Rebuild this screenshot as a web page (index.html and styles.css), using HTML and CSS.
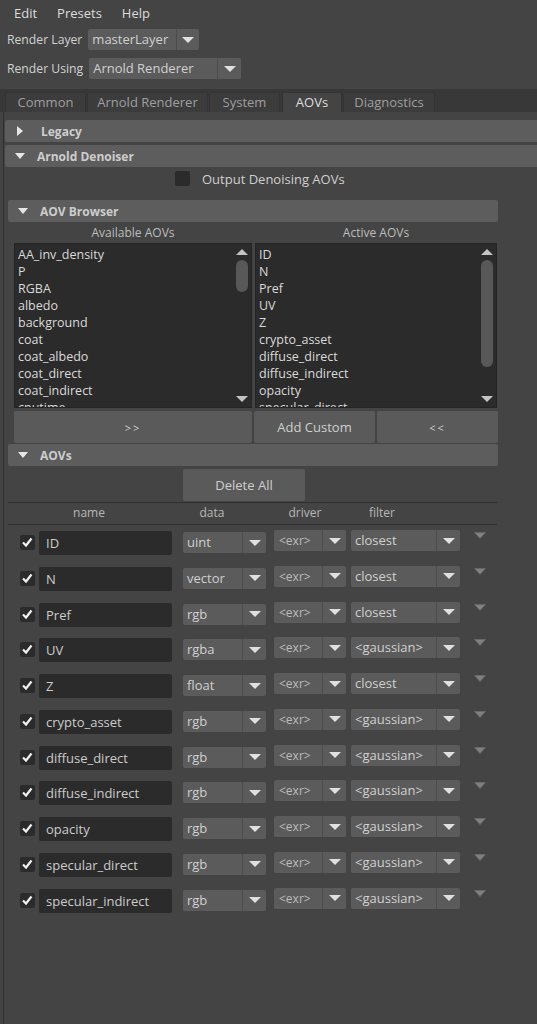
FILE: index.html
```html
<!DOCTYPE html>
<html lang="en">
<head>
  <meta charset="UTF-8" />
  <title>Render Settings</title>
  <link rel="stylesheet" href="styles.css">
</head>
<body>
  <div class="menubar">
    <span>Edit</span>
    <span>Presets</span>
    <span>Help</span>
  </div>

  <div class="field-row">
    <label>Render Layer</label>
    <div class="combo combo-layer"><span class="value">masterLayer</span><span class="drop"></span></div>
  </div>
  <div class="field-row">
    <label>Render Using</label>
    <div class="combo combo-renderer"><span class="value">Arnold Renderer</span><span class="drop"></span></div>
  </div>

  <div class="tabbar">
    <div class="tab tab-common">Common</div>
    <div class="tab tab-arnold">Arnold Renderer</div>
    <div class="tab tab-system">System</div>
    <div class="tab tab-aovs active">AOVs</div>
    <div class="tab tab-diag">Diagnostics</div>
  </div>

  <div class="panel">
    <div class="frame-head wide collapsed"><span class="twist"></span>Legacy</div>
    <div class="frame-head wide"><span class="twist"></span>Arnold Denoiser</div>

    <div class="denoise-row">
      <span class="check"></span>
      <span>Output Denoising AOVs</span>
    </div>

    <div class="section">
      <div class="frame-head"><span class="twist"></span>AOV Browser</div>

      <div class="browser">
        <div class="browser-col col-available">
          <div class="list-title">Available AOVs</div>
          <div class="list">
            <div class="items">
              <div>AA_inv_density</div>
              <div>P</div>
              <div>RGBA</div>
              <div>albedo</div>
              <div>background</div>
              <div>coat</div>
              <div>coat_albedo</div>
              <div>coat_direct</div>
              <div>coat_indirect</div>
              <div>cputime</div>
              <div>diffuse</div>
            </div>
            <div class="scrollbar">
              <span class="sb-up"></span>
              <span class="thumb thumb-short"></span>
              <span class="sb-fill"></span>
              <span class="sb-down"></span>
            </div>
          </div>
        </div>
        <div class="browser-col col-active">
          <div class="list-title">Active AOVs</div>
          <div class="list">
            <div class="items">
              <div>ID</div>
              <div>N</div>
              <div>Pref</div>
              <div>UV</div>
              <div>Z</div>
              <div>crypto_asset</div>
              <div>diffuse_direct</div>
              <div>diffuse_indirect</div>
              <div>opacity</div>
              <div>specular_direct</div>
              <div>specular_indirect</div>
            </div>
            <div class="scrollbar">
              <span class="sb-up"></span>
              <span class="thumb thumb-long"></span>
              <span class="sb-fill"></span>
              <span class="sb-down"></span>
            </div>
          </div>
        </div>
      </div>

      <div class="browser-buttons">
        <button class="btn btn-add">&gt;&gt;</button>
        <button class="btn btn-custom">Add Custom</button>
        <button class="btn btn-remove">&lt;&lt;</button>
      </div>

      <div class="frame-head aovs-head"><span class="twist"></span>AOVs</div>

      <div class="delete-row">
        <button class="btn btn-delete">Delete All</button>
      </div>

      <div class="col-heads">
        <span>name</span>
        <span>data</span>
        <span>driver</span>
        <span>filter</span>
      </div>

      <div class="aov-rows">
        <div class="aov-row">
          <span class="check"></span>
          <div class="name-field">ID</div>
          <div class="combo combo-data"><span class="value">uint</span><span class="drop"></span></div>
          <div class="combo combo-driver"><span class="value">&lt;exr&gt;</span><span class="drop"></span></div>
          <div class="combo combo-filter"><span class="value">closest</span><span class="drop"></span></div>
          <span class="row-menu"></span>
        </div>
        <div class="aov-row">
          <span class="check"></span>
          <div class="name-field">N</div>
          <div class="combo combo-data"><span class="value">vector</span><span class="drop"></span></div>
          <div class="combo combo-driver"><span class="value">&lt;exr&gt;</span><span class="drop"></span></div>
          <div class="combo combo-filter"><span class="value">closest</span><span class="drop"></span></div>
          <span class="row-menu"></span>
        </div>
        <div class="aov-row">
          <span class="check"></span>
          <div class="name-field">Pref</div>
          <div class="combo combo-data"><span class="value">rgb</span><span class="drop"></span></div>
          <div class="combo combo-driver"><span class="value">&lt;exr&gt;</span><span class="drop"></span></div>
          <div class="combo combo-filter"><span class="value">closest</span><span class="drop"></span></div>
          <span class="row-menu"></span>
        </div>
        <div class="aov-row">
          <span class="check"></span>
          <div class="name-field">UV</div>
          <div class="combo combo-data"><span class="value">rgba</span><span class="drop"></span></div>
          <div class="combo combo-driver"><span class="value">&lt;exr&gt;</span><span class="drop"></span></div>
          <div class="combo combo-filter"><span class="value">&lt;gaussian&gt;</span><span class="drop"></span></div>
          <span class="row-menu"></span>
        </div>
        <div class="aov-row">
          <span class="check"></span>
          <div class="name-field">Z</div>
          <div class="combo combo-data"><span class="value">float</span><span class="drop"></span></div>
          <div class="combo combo-driver"><span class="value">&lt;exr&gt;</span><span class="drop"></span></div>
          <div class="combo combo-filter"><span class="value">closest</span><span class="drop"></span></div>
          <span class="row-menu"></span>
        </div>
        <div class="aov-row">
          <span class="check"></span>
          <div class="name-field">crypto_asset</div>
          <div class="combo combo-data"><span class="value">rgb</span><span class="drop"></span></div>
          <div class="combo combo-driver"><span class="value">&lt;exr&gt;</span><span class="drop"></span></div>
          <div class="combo combo-filter"><span class="value">&lt;gaussian&gt;</span><span class="drop"></span></div>
          <span class="row-menu"></span>
        </div>
        <div class="aov-row">
          <span class="check"></span>
          <div class="name-field">diffuse_direct</div>
          <div class="combo combo-data"><span class="value">rgb</span><span class="drop"></span></div>
          <div class="combo combo-driver"><span class="value">&lt;exr&gt;</span><span class="drop"></span></div>
          <div class="combo combo-filter"><span class="value">&lt;gaussian&gt;</span><span class="drop"></span></div>
          <span class="row-menu"></span>
        </div>
        <div class="aov-row">
          <span class="check"></span>
          <div class="name-field">diffuse_indirect</div>
          <div class="combo combo-data"><span class="value">rgb</span><span class="drop"></span></div>
          <div class="combo combo-driver"><span class="value">&lt;exr&gt;</span><span class="drop"></span></div>
          <div class="combo combo-filter"><span class="value">&lt;gaussian&gt;</span><span class="drop"></span></div>
          <span class="row-menu"></span>
        </div>
        <div class="aov-row">
          <span class="check"></span>
          <div class="name-field">opacity</div>
          <div class="combo combo-data"><span class="value">rgb</span><span class="drop"></span></div>
          <div class="combo combo-driver"><span class="value">&lt;exr&gt;</span><span class="drop"></span></div>
          <div class="combo combo-filter"><span class="value">&lt;gaussian&gt;</span><span class="drop"></span></div>
          <span class="row-menu"></span>
        </div>
        <div class="aov-row">
          <span class="check"></span>
          <div class="name-field">specular_direct</div>
          <div class="combo combo-data"><span class="value">rgb</span><span class="drop"></span></div>
          <div class="combo combo-driver"><span class="value">&lt;exr&gt;</span><span class="drop"></span></div>
          <div class="combo combo-filter"><span class="value">&lt;gaussian&gt;</span><span class="drop"></span></div>
          <span class="row-menu"></span>
        </div>
        <div class="aov-row">
          <span class="check"></span>
          <div class="name-field">specular_indirect</div>
          <div class="combo combo-data"><span class="value">rgb</span><span class="drop"></span></div>
          <div class="combo combo-driver"><span class="value">&lt;exr&gt;</span><span class="drop"></span></div>
          <div class="combo combo-filter"><span class="value">&lt;gaussian&gt;</span><span class="drop"></span></div>
          <span class="row-menu"></span>
        </div>
      </div>
    </div>
  </div>
</body>
</html>
```

FILE: styles.css
```css
* {
  box-sizing: border-box;
}

html, body {
  margin: 0;
  height: 100%;
}

body {
  background: #444;
  color: #cfcfcf;
  font-family: "Open Sans", "Noto Sans", sans-serif;
  font-size: 12px;
  overflow: hidden;
}

/* top menu + render fields */

.menubar {
  display: flex;
  gap: 20px;
  height: 26px;
  align-items: center;
  padding-left: 14px;
  color: #dcdcdc;
  font-size: 13px;
}

.field-row {
  display: flex;
  align-items: center;
  gap: 6px;
  height: 21px;
  margin-top: 3px;
  padding-left: 7px;
  font-size: 12.2px;
  color: #d2d2d2;
}

.field-row + .field-row {
  margin-top: 8px;
}

.combo {
  display: flex;
  height: 21px;
  background: #5b5b5b;
  border-radius: 2px;
  color: #d0d0d0;
}

.combo .value {
  flex: 1;
  padding-left: 4px;
  line-height: 21px;
  white-space: nowrap;
  overflow: hidden;
}

.combo .drop {
  width: 24px;
  border-left: 1px solid #4c4c4c;
  display: flex;
  align-items: center;
  justify-content: center;
}

.combo .drop::after {
  content: "";
  border-left: 6px solid transparent;
  border-right: 6px solid transparent;
  border-top: 6px solid #e0e0e0;
}

.combo-layer {
  width: 111px;
  font-size: 13px;
}

.combo-layer .drop {
  width: 23px;
}

.combo-renderer {
  width: 152px;
  font-size: 13px;
}

/* tabs */

.tabbar {
  display: flex;
  align-items: flex-end;
  gap: 1px;
  height: 23px;
  margin-top: 10px;
  padding-left: 5px;
  background: #383838;
}

.tab {
  height: 20px;
  line-height: 19px;
  text-align: center;
  background: #3c3c3c;
  color: #9f9f9f;
  font-size: 13px;
  border: 1px solid #333;
  border-bottom: none;
  border-radius: 2px 2px 0 0;
}

.tab.active {
  background: #444;
  color: #dedede;
}

.tab-common { width: 81px; }
.tab-arnold { width: 121px; }
.tab-system { width: 71px; }
.tab-aovs { width: 60px; margin-left: 1px; }
.tab-diag { width: 92px; }

/* main panel */

.panel {
  margin-left: 3px;
  border-left: 1px solid #2f2f2f;
  padding: 8px 0 0 1px;
  min-height: calc(100vh - 112px);
}

.frame-head {
  display: flex;
  align-items: center;
  height: 22px;
  background: #5d5d5d;
  border-radius: 2px;
  font-weight: bold;
  color: #cdcdcd;
  white-space: nowrap;
}

.frame-head.wide {
  width: 560px;
}

.frame-head + .frame-head {
  margin-top: 3px;
}

.twist {
  width: 32px;
  height: 22px;
  display: flex;
  align-items: center;
  padding-left: 10px;
}

.twist::after {
  content: "";
  border-left: 5px solid transparent;
  border-right: 5px solid transparent;
  border-top: 6px solid #e6e6e6;
}

.collapsed .twist {
  width: 36px;
  padding-left: 12px;
}

.collapsed .twist::after {
  border-top: 5px solid transparent;
  border-bottom: 5px solid transparent;
  border-left: 6px solid #e6e6e6;
  border-right: none;
}

.check {
  display: inline-block;
  width: 15px;
  height: 15px;
  background: #2b2b2b;
  border-radius: 2px;
  flex-shrink: 0;
}

.denoise-row {
  display: flex;
  align-items: center;
  gap: 12px;
  height: 15px;
  margin-top: 4px;
  padding-left: 170px;
  font-size: 13px;
  color: #cfcfcf;
}

.section {
  width: 490px;
  margin: 14px 0 0 3px;
}

/* aov browser */

.browser {
  display: flex;
  gap: 3px;
  padding-left: 6px;
}

.col-available { width: 238px; }
.col-active { width: 242px; }

.list-title {
  height: 21px;
  line-height: 22px;
  text-align: center;
  color: #bdbdbd;
}

.list {
  display: flex;
  height: 165px;
  background: #2b2b2b;
  border: 1px solid #242424;
  overflow: hidden;
}

.items {
  flex: 1;
  padding: 2px 0 0 3px;
  line-height: 17px;
  font-size: 12.5px;
  color: #dadada;
  overflow: hidden;
}

.scrollbar {
  display: flex;
  flex-direction: column;
  align-items: center;
  width: 14px;
  margin-right: 2px;
}

.sb-up, .sb-down {
  height: 16px;
  display: flex;
  align-items: center;
  justify-content: center;
}

.sb-up::after {
  content: "";
  border-left: 6px solid transparent;
  border-right: 6px solid transparent;
  border-bottom: 6px solid #c4c4c4;
}

.sb-down::after {
  content: "";
  border-left: 6px solid transparent;
  border-right: 6px solid transparent;
  border-top: 6px solid #c4c4c4;
}

.sb-fill {
  flex: 1;
}

.thumb {
  width: 12px;
  background: #585858;
  border-radius: 6px;
}

.thumb-short { height: 32px; }
.thumb-long { height: 107px; }

.browser-buttons {
  display: flex;
  gap: 2px;
  margin-top: 3px;
  padding-left: 6px;
}

.btn {
  height: 32px;
  background: #5a5a5a;
  border: none;
  border-radius: 2px;
  color: #cfcfcf;
  font-family: inherit;
  font-size: 13px;
  padding: 0;
}

.btn-add { width: 238px; font-size: 11px; letter-spacing: 2px; }
.btn-custom { width: 121px; }
.btn-remove { width: 121px; font-size: 11px; letter-spacing: 2px; }

.aovs-head {
  margin-top: 1px;
}

.delete-row {
  margin-top: 3px;
  padding-left: 175px;
}

.btn-delete {
  width: 122px;
}

.col-heads {
  display: grid;
  grid-template-columns: 162px 84px 102px 52px;
  height: 23px;
  margin-top: 1px;
  border-top: 1px solid #2e2e2e;
  border-bottom: 1px solid #2e2e2e;
  width: 489px;
  line-height: 20px;
  text-align: center;
  color: #b8b8b8;
}

/* aov rows */

.aov-row {
  display: flex;
  align-items: flex-start;
  height: 35.75px;
}

.aov-row .check {
  margin: 10px 0 0 12px;
  background: #2b2b2b url("data:image/svg+xml,%3Csvg xmlns='http://www.w3.org/2000/svg' width='15' height='15'%3E%3Cpolyline points='3,7.5 6,10.5 11.5,3.5' fill='none' stroke='%23f0f0f0' stroke-width='2.2'/%3E%3C/svg%3E") no-repeat center;
}

.name-field {
  width: 133px;
  height: 24px;
  margin: 6px 0 0 4px;
  padding-left: 7px;
  line-height: 25px;
  background: #2b2b2b;
  border-radius: 2px;
  font-size: 13px;
  color: #cccccc;
  white-space: nowrap;
}

.combo-data {
  width: 83px;
  margin: 7px 0 0 11px;
  font-size: 13px;
}

.combo-driver {
  width: 72px;
  margin: 5px 0 0 8px;
  color: #bbbbbb;
}

.combo-driver .value {
  padding-left: 5px;
}

.combo-filter {
  width: 109px;
  margin: 5px 0 0 5px;
  font-size: 13px;
}

.row-menu {
  width: 12px;
  height: 7px;
  margin: 7px 0 0 14px;
  background: url("data:image/svg+xml,%3Csvg xmlns='http://www.w3.org/2000/svg' width='12' height='7'%3E%3Cpolygon points='0.5,0.5 11.5,0.5 6,6.5' fill='%23808080' stroke='%23676767'/%3E%3C/svg%3E") no-repeat;
}
```
